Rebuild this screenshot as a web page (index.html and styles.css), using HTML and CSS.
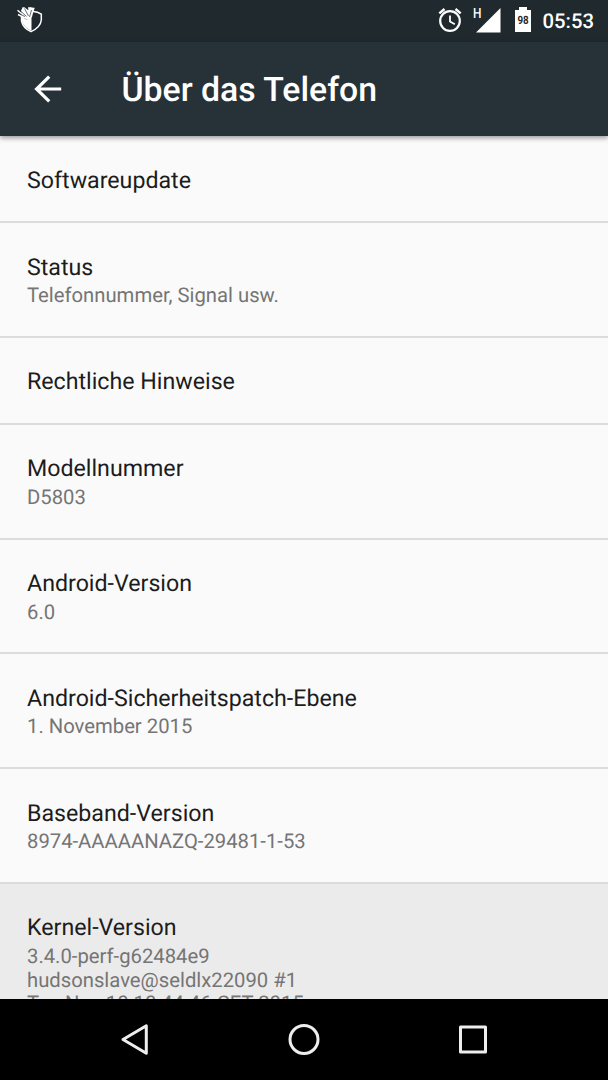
FILE: index.html
```html
<!DOCTYPE html>
<html lang="de">
<head>
<meta charset="utf-8">
<title>Über das Telefon</title>
<link rel="stylesheet" href="styles.css">
</head>
<body>
<div class="screen">
  <header class="status-bar">
    <svg class="shield-icon" width="30" height="34" viewBox="0 0 30 34">
      <path d="M17 11.500Q22 11 26.300 14.200V20Q25.500 27.500 16 31.600Q8 28 6.500 21V15" fill="none" stroke="#fff" stroke-width="1.500"/>
      <path d="M7 17L12 20L16.500 14.500V31Q8.500 27 7 21Z" fill="#fff"/>
      <path d="M6 10L9 7L13 10L15 7L19 9L17 17L12 20L7 16Z" fill="#fff"/>
      <path d="M2.500 10.200L10 16.500M3 14.500L10 18M7.500 7.500L13 16M13 8L19.500 8.500M19 8L15 17" stroke="#fff" stroke-width="1.500"/>
      <path d="M5.500 11L11.500 16.500M9.500 8.500L13.500 16M16.500 10L14.500 17M5.500 14.500L10 16.500" stroke="#263238" stroke-width=".7"/>
    </svg>
    <div class="status-right">
      <svg class="alarm-icon" width="26" height="26" viewBox="0 0 26 26" fill="none" stroke="#fff">
        <circle cx="13" cy="14" r="9.800" stroke-width="2.200"/>
        <path d="M13 8.500V14.500L17.800 17.300" stroke-width="1.800"/>
        <path d="M2.300 6.400L7.500 2M18.500 2L23.700 6.400" stroke-width="2.500"/>
      </svg>
      <div class="signal">
        <span class="network">H</span>
        <svg width="25" height="25" viewBox="0 0 25 25"><path d="M0 24.500L24.500 0V24.500Z" fill="#fff"/></svg>
      </div>
      <div class="battery"><span>98</span></div>
      <span class="clock">05:53</span>
    </div>
  </header>
  <div class="app-bar">
    <svg class="back-icon" width="28" height="28" viewBox="0 0 28 28" fill="none" stroke="#fff" stroke-width="3.200">
      <path d="M27.200 14H3M15.200 1.700L2.600 14L15.200 26.300"/>
    </svg>
    <h1 class="page-title">Über das Telefon</h1>
  </div>
  <main class="list">
    <section class="row row-single"><h2>Softwareupdate</h2></section>
    <section class="row"><h2>Status</h2><p>Telefonnummer, Signal usw.</p></section>
    <section class="row row-single"><h2>Rechtliche Hinweise</h2></section>
    <section class="row"><h2>Modellnummer</h2><p>D5803</p></section>
    <section class="row"><h2>Android-Version</h2><p>6.0</p></section>
    <section class="row"><h2>Android-Sicherheitspatch-Ebene</h2><p>1. November 2015</p></section>
    <section class="row"><h2>Baseband-Version</h2><p>8974-AAAAANAZQ-29481-1-53</p></section>
    <section class="row row-pressed"><h2>Kernel-Version</h2><p>3.4.0-perf-g62484e9<br>hudsonslave@seldlx22090 #1<br>Tue Nov 10 10:44:46 CET 2015</p></section>
  </main>
  <nav class="nav-bar">
    <svg width="34" height="34" viewBox="0 0 34 34"><path d="M28.300 2.800V30.200L5 16.500Z"/></svg>
    <svg width="34" height="34" viewBox="0 0 34 34"><circle cx="17" cy="16.500" r="14"/></svg>
    <svg width="34" height="34" viewBox="0 0 34 34"><rect x="4.500" y="4" width="25" height="25"/></svg>
  </nav>
</div>
</body>
</html>
```

FILE: styles.css
```css
* { box-sizing: border-box; }
body { margin: 0; font-family: Roboto, "Noto Sans", sans-serif; text-rendering: geometricPrecision; }
.screen { width: 608px; height: 1080px; display: flex; flex-direction: column; overflow: hidden; background: #fafafa; }
.status-bar { flex: 0 0 41px; display: flex; justify-content: space-between; background: #20292d; color: #fff; padding: 0 14px 0 15px; }
.shield-icon { display: block; }
.status-right { display: flex; align-items: flex-start; }
.alarm-icon { margin: 7px 10px 0 0; }
.signal { display: flex; margin: 8px 14px 0 0; }
.signal svg { margin-left: -6px; }
.network { font-size: 14px; line-height: 13px; font-weight: 500; width: 9px; transform: scaleX(.85); transform-origin: left; }
.battery { position: relative; width: 16px; height: 22px; margin: 10px 12px 0 0; background: #fff; color: #20292d; font-size: 11.500px; line-height: 21px; font-weight: 700; text-align: center; }
.battery::before { content: ""; position: absolute; left: 4px; top: -3px; width: 8px; height: 3px; background: #fff; }
.battery span { display: block; transform: scaleX(.85); }
.clock { font-size: 20.300px; line-height: 42px; font-weight: 500; }
.app-bar { flex: 0 0 94px; position: relative; z-index: 1; display: flex; align-items: center; padding-left: 33.500px; background: #263238; color: #fff; box-shadow: 0 2px 5px rgba(0,0,0,.4); }
.back-icon { margin-bottom: 1px; }
.page-title { margin: 3px 0 0 60px; font-size: 33.800px; line-height: 40px; font-weight: 500; }
.list { flex: 1; min-height: 0; overflow: hidden; }
.row { height: 114.800px; padding: 29.500px 27px 0; border-bottom: 2px solid #dcdcdc; }
.row-single { height: 87px; }
.row h2 { margin: 0; font-size: 23.200px; line-height: 28px; font-weight: 400; color: #1c1c1c; }
.row p { margin: 3.500px 0 0; font-size: 20.260px; line-height: 23.700px; color: #757575; white-space: nowrap; }
.row-pressed { height: 160px; background: #ebebeb; }
.nav-bar { flex: 0 0 81px; display: flex; align-items: center; justify-content: center; gap: 135px; background: #000; fill: none; stroke: #eee; stroke-width: 3; stroke-linejoin: round; }
```
